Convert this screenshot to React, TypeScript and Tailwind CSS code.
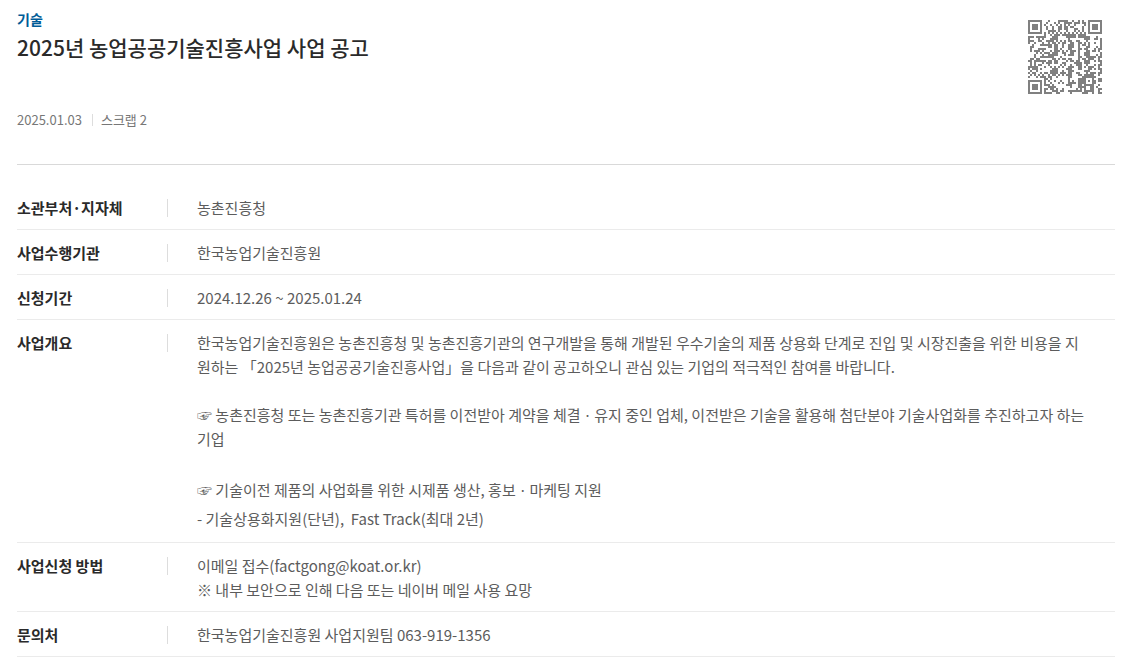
import type { ReactNode } from "react";

const NOTICE_URL =
  "https://www.bizinfo.go.kr/web/lay1/bbs/S1T122C128/AS/74/view.do?pblancId=PBLN_000000000103442";

const QR_SIZE = 37;
const DATA_WORDS = 108;
const EC_WORDS = 26;

function gfMul(a: number, b: number): number {
  let z = 0;
  for (let i = 7; i >= 0; i--) {
    z = (z << 1) ^ ((z >>> 7) * 0x11d);
    z ^= ((b >>> i) & 1) * a;
  }
  return z;
}

function errorWords(data: number[]): number[] {
  const gen: number[] = new Array(EC_WORDS).fill(0);
  gen[EC_WORDS - 1] = 1;
  let root = 1;
  for (let i = 0; i < EC_WORDS; i++) {
    for (let j = 0; j < EC_WORDS; j++) {
      gen[j] = gfMul(gen[j], root);
      if (j + 1 < EC_WORDS) gen[j] ^= gen[j + 1];
    }
    root = gfMul(root, 2);
  }
  const rem: number[] = new Array(EC_WORDS).fill(0);
  for (const b of data) {
    const factor = b ^ (rem.shift() as number);
    rem.push(0);
    gen.forEach((g, i) => {
      rem[i] ^= gfMul(g, factor);
    });
  }
  return rem;
}

const masks: ((x: number, y: number) => boolean)[] = [
  (x, y) => (x + y) % 2 === 0,
  (_x, y) => y % 2 === 0,
  (x) => x % 3 === 0,
  (x, y) => (x + y) % 3 === 0,
  (x, y) => (Math.floor(x / 3) + Math.floor(y / 2)) % 2 === 0,
  (x, y) => ((x * y) % 2) + ((x * y) % 3) === 0,
  (x, y) => (((x * y) % 2) + ((x * y) % 3)) % 2 === 0,
  (x, y) => (((x + y) % 2) + ((x * y) % 3)) % 2 === 0,
];

/** Version 5, level L symbol in byte mode. */
function buildQr(text: string, mask: number): boolean[][] {
  const bits: number[] = [];
  const push = (v: number, n: number) => {
    for (let i = n - 1; i >= 0; i--) bits.push((v >>> i) & 1);
  };
  push(4, 4);
  push(text.length, 8);
  for (const c of text) push(c.charCodeAt(0), 8);
  push(0, 4);
  const data: number[] = [];
  for (let i = 0; i < bits.length; i += 8) {
    data.push(parseInt(bits.slice(i, i + 8).join(""), 2));
  }
  for (let pad = 0xec; data.length < DATA_WORDS; pad ^= 0xec ^ 0x11) data.push(pad);
  const words = data.concat(errorWords(data));

  const grid = Array.from({ length: QR_SIZE }, () => new Array<boolean>(QR_SIZE).fill(false));
  const fixed = Array.from({ length: QR_SIZE }, () => new Array<boolean>(QR_SIZE).fill(false));
  const set = (x: number, y: number, v: boolean) => {
    if (x < 0 || y < 0 || x >= QR_SIZE || y >= QR_SIZE) return;
    grid[y][x] = v;
    fixed[y][x] = true;
  };
  for (let i = 0; i < QR_SIZE; i++) {
    set(6, i, i % 2 === 0);
    set(i, 6, i % 2 === 0);
  }
  for (const [cx, cy] of [[3, 3], [QR_SIZE - 4, 3], [3, QR_SIZE - 4]]) {
    for (let dy = -4; dy <= 4; dy++) {
      for (let dx = -4; dx <= 4; dx++) {
        const d = Math.max(Math.abs(dx), Math.abs(dy));
        set(cx + dx, cy + dy, d !== 2 && d !== 4);
      }
    }
  }
  for (let dy = -2; dy <= 2; dy++) {
    for (let dx = -2; dx <= 2; dx++) {
      set(30 + dx, 30 + dy, Math.max(Math.abs(dx), Math.abs(dy)) !== 1);
    }
  }
  const level = (1 << 3) | mask;
  let rem = level;
  for (let i = 0; i < 10; i++) rem = (rem << 1) ^ ((rem >>> 9) * 0x537);
  const fmt = ((level << 10) | rem) ^ 0x5412;
  const f = (i: number) => ((fmt >>> i) & 1) === 1;
  for (let i = 0; i <= 5; i++) set(8, i, f(i));
  set(8, 7, f(6));
  set(8, 8, f(7));
  set(7, 8, f(8));
  for (let i = 9; i < 15; i++) set(14 - i, 8, f(i));
  for (let i = 0; i < 8; i++) set(QR_SIZE - 1 - i, 8, f(i));
  for (let i = 8; i < 15; i++) set(8, QR_SIZE - 15 + i, f(i));
  set(8, QR_SIZE - 8, true);

  let k = 0;
  for (let right = QR_SIZE - 1; right >= 1; right -= 2) {
    if (right === 6) right = 5;
    for (let v = 0; v < QR_SIZE; v++) {
      for (let j = 0; j < 2; j++) {
        const x = right - j;
        const y = ((right + 1) & 2) === 0 ? QR_SIZE - 1 - v : v;
        if (fixed[y][x]) continue;
        const bit = k < words.length * 8 && ((words[k >>> 3] >>> (7 - (k & 7))) & 1) === 1;
        grid[y][x] = bit !== masks[mask](x, y);
        k++;
      }
    }
  }
  return grid;
}

function QrCode({ mask }: { mask: number }) {
  const path = buildQr(NOTICE_URL, mask)
    .flatMap((row, y) => row.map((on, x) => (on ? `M${x} ${y}h1v1h-1z` : "")))
    .join("");
  return (
    <svg
      viewBox="0 0 37 37"
      className="size-[74px] shrink-0 text-[#808080]"
      shapeRendering="crispEdges"
      role="img"
      aria-label="QR 코드"
    >
      <path d={path} fill="currentColor" />
    </svg>
  );
}

function Row({ label, children }: { label: string; children: ReactNode }) {
  return (
    <div className="flex gap-[29px] border-b border-[#ebebeb] pt-[11px] pb-[9px]">
      <dt className="flex h-6 w-[151px] shrink-0 items-center justify-between font-bold text-[#2a2a2a]">
        {label}
        <span className="h-[18px] w-px bg-[#dddddd]" />
      </dt>
      <dd className="min-w-0 flex-1 text-[#5c5c5c]">{children}</dd>
    </div>
  );
}

export default function App() {
  return (
    <main className="bg-white pr-[15px] pl-[17px] font-['Noto_Sans_CJK_KR','Noto_Sans',sans-serif]">
      <header className="flex items-start justify-between border-b border-[#d9d9d9] pt-[7px] pr-[13px] pb-8">
        <div>
          <p className="text-[14px] leading-6 font-bold text-[#005c97]">기술</p>
          <h1 className="text-[21px] leading-8 font-medium text-[#2a2a2a]">
            2025년 농업공공기술진흥사업 사업 공고
          </h1>
          <div className="mt-[45px] flex items-center text-[13px] leading-6 text-[#777777]">
            <span>2025.01.03</span>
            <span className="mr-2 ml-[10px] h-3 w-px bg-[#dddddd]" />
            <span>스크랩 2</span>
          </div>
        </div>
        <div className="pt-[13px]">
          <QrCode mask={0} />
        </div>
      </header>

      <dl className="mt-5 text-[15px] leading-6">
        <Row label="소관부처·지자체">농촌진흥청</Row>
        <Row label="사업수행기관">한국농업기술진흥원</Row>
        <Row label="신청기간">2024.12.26 ~ 2025.01.24</Row>
        <Row label="사업개요">
          <p>
            한국농업기술진흥원은 농촌진흥청 및 농촌진흥기관의 연구개발을 통해 개발된 우수기술의 제품 상용화
            단계로 진입 및 시장진출을 위한 비용을 지
            <br />
            원하는 「2025년 농업공공기술진흥사업」을 다음과 같이 공고하오니 관심 있는 기업의 적극적인 참여를
            바랍니다.
          </p>
          <p className="mt-6">
            ☞ 농촌진흥청 또는 농촌진흥기관 특허를 이전받아 계약을 체결ㆍ유지 중인 업체, 이전받은 기술을
            활용해 첨단분야 기술사업화를 추진하고자 하는
            <br />
            기업
          </p>
          <p className="mt-6 leading-[29px]">
            ☞ 기술이전 제품의 사업화를 위한 시제품 생산, 홍보ㆍ마케팅 지원
            <br />- 기술상용화지원(단년),&nbsp; Fast Track(최대 2년)
          </p>
        </Row>
        <Row label="사업신청 방법">
          이메일 접수(factgong@koat.or.kr)
          <br />※ 내부 보안으로 인해 다음 또는 네이버 메일 사용 요망
        </Row>
        <Row label="문의처">한국농업기술진흥원 사업지원팀 063-919-1356</Row>
      </dl>
    </main>
  );
}
